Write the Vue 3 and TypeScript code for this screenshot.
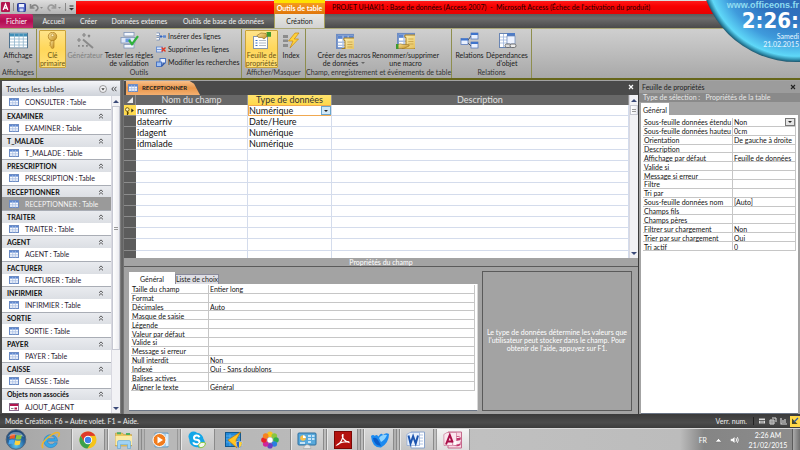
<script setup lang="ts">
import { ref } from 'vue'

interface NavGroup { title: string; item: string; form?: boolean }
interface Prop { label: string; value: string }

const ribbonTabs: { label: string; cls: string }[] = [
  { label: 'Accueil', cls: 't-home' },
  { label: 'Créer', cls: 't-create' },
  { label: 'Données externes', cls: 't-ext' },
  { label: 'Outils de base de données', cls: 't-tools' },
]

const navGroups: NavGroup[] = [
  { title: 'EXAMINER', item: 'EXAMINER : Table' },
  { title: 'T_MALADE', item: 'T_MALADE : Table' },
  { title: 'PRESCRIPTION', item: 'PRESCRIPTION : Table' },
  { title: 'RECEPTIONNER', item: 'RECEPTIONNER : Table' },
  { title: 'TRAITER', item: 'TRAITER : Table' },
  { title: 'AGENT', item: 'AGENT : Table' },
  { title: 'FACTURER', item: 'FACTURER : Table' },
  { title: 'INFIRMIER', item: 'INFIRMIER : Table' },
  { title: 'SORTIE', item: 'SORTIE : Table' },
  { title: 'PAYER', item: 'PAYER : Table' },
  { title: 'CAISSE', item: 'CAISSE : Table' },
  { title: 'Objets non associés', item: 'AJOUT_AGENT', form: true },
]
const selectedItem = ref('RECEPTIONNER : Table')

const fields: { name: string; type: string }[] = [
  { name: 'numrec', type: 'Numérique' },
  { name: 'datearriv', type: 'Date/Heure' },
  { name: 'idagent', type: 'Numérique' },
  { name: 'idmalade', type: 'Numérique' },
]
const emptyRows = 10
const firstType = ref('Numérique')

const fieldProps = ref<Prop[]>([
  { label: 'Taille du champ', value: 'Entier long' },
  { label: 'Format', value: '' },
  { label: 'Décimales', value: 'Auto' },
  { label: 'Masque de saisie', value: '' },
  { label: 'Légende', value: '' },
  { label: 'Valeur par défaut', value: '' },
  { label: 'Valide si', value: '' },
  { label: 'Message si erreur', value: '' },
  { label: 'Null interdit', value: 'Non' },
  { label: 'Indexé', value: 'Oui - Sans doublons' },
  { label: 'Balises actives', value: '' },
  { label: 'Aligner le texte', value: 'Général' },
])

const subsheet = ref('Non')
const tableProps = ref<Prop[]>([
  { label: 'Sous-feuille données hauteu', value: '0cm' },
  { label: 'Orientation', value: 'De gauche à droite' },
  { label: 'Description', value: '' },
  { label: 'Affichage par défaut', value: 'Feuille de données' },
  { label: 'Valide si', value: '' },
  { label: 'Message si erreur', value: '' },
  { label: 'Filtre', value: '' },
  { label: 'Tri par', value: '' },
  { label: 'Sous-feuille données nom', value: '[Auto]' },
  { label: 'Champs fils', value: '' },
  { label: 'Champs pères', value: '' },
  { label: 'Filtrer sur chargement', value: 'Non' },
  { label: 'Trier par sur chargement', value: 'Oui' },
  { label: 'Tri actif', value: '0' },
])
</script>

<template>
  <div class="app">
    <svg class="defs" aria-hidden="true">
      <defs>
        <linearGradient id="paper" x1="0" y1="0" x2="1" y2="1"><stop offset="0" stop-color="#fff3b8" /><stop offset="1" stop-color="#dfb64a" /></linearGradient>
        <linearGradient id="gold" x1="0" y1="0" x2="1" y2="1"><stop offset="0" stop-color="#ffe9a0" /><stop offset="1" stop-color="#c08a1c" /></linearGradient>
        <symbol id="sheet" viewBox="0 0 10 8">
          <rect x=".5" y=".5" width="9" height="7" fill="#fff" stroke="#6d8cc4" />
          <rect x="1" y="1" width="8" height="1.6" fill="#5b86d0" />
          <path d="M1 4.4h8M1 6h8M3.7 1v6.5M6.4 1v6.5" stroke="#a9bfe4" stroke-width=".7" />
        </symbol>
        <symbol id="sheetBig" viewBox="0 0 19 16">
          <rect x=".5" y=".5" width="18" height="15" fill="#fff" stroke="#4f7390" />
          <rect x="1" y="1" width="17" height="3" fill="#3f8fb8" />
          <path d="M1 6.5h17M1 9.5h17M1 12.5h17M5.5 1v14M10 1v14M14.3 1v14" stroke="#8fb4cc" stroke-width=".8" />
        </symbol>
        <symbol id="scroll" viewBox="0 0 13 11">
          <path d="M3 1h8.500q1.500 1 .5 2.500h-2v5q.5 2-1.200 2.200H1.500Q.2 9.500 1.500 8.300H3.400V3Q2 2 3 1z" fill="url(#paper)" stroke="#a87e22" stroke-width=".7" />
          <path d="M5 3.800h3.500M5 5.500h3.500M5 7.200h3.500" stroke="#c39a3c" stroke-width=".5" />
        </symbol>
      </defs>
    </svg>

    <header class="titlebar">
      <div class="quick">
        <svg class="q-logo" viewBox="0 0 9 10"><rect width="9" height="10" rx="1" fill="#b3164f" /><path d="M2.200 8 4.500 2 6.800 8M3 6h3" fill="none" stroke="#fff" stroke-width="1.300" /></svg>
        <i class="q-sep"></i>
        <button class="q-btn" aria-label="Enregistrer"><svg viewBox="0 0 9 9"><rect x=".5" y=".5" width="8" height="8" rx=".8" fill="#4a5fc4" stroke="#2a3a94" /><rect x="2" y="1" width="5" height="3.300" fill="#eef2ff" /><rect x="2.500" y="5.500" width="4" height="3" fill="#c8d2ee" /></svg></button>
        <button class="q-btn wide" aria-label="Annuler"><svg viewBox="0 0 14 9"><path d="M1 1v4h4M1.500 4.500Q5 .5 7.500 3T6 8" fill="none" stroke="#858585" stroke-width="1.600" /><path d="M10.500 4h3l-1.500 1.700z" fill="#888" /></svg></button>
        <button class="q-btn wide" aria-label="Rétablir"><svg viewBox="0 0 14 9"><path d="M8 1v4H4M7.500 4.500Q4 .5 1.500 3T3 8" fill="none" stroke="#9a9a9a" stroke-width="1.600" /><path d="M10.500 4h3l-1.500 1.700z" fill="#888" /></svg></button>
        <i class="q-sep"></i>
        <button class="q-btn tiny" aria-label="Personnaliser"><svg viewBox="0 0 5 9"><path d="M.5 3h4" stroke="#333" /><path d="M0 5h5l-2.500 2.500z" fill="#333" /></svg></button>
      </div>
      <div class="title-red">
        <h1>PROJET UHAKI1 : Base de données (Access 2007) &nbsp;-&nbsp; Microsoft Access (Échec de l'activation du produit)</h1>
      </div>
    </header>

    <nav class="tabs">
      <button class="tab file">Fichier</button>
      <button v-for="t in ribbonTabs" :key="t.label" class="tab" :class="t.cls">{{ t.label }}</button>
      <div class="context">
        <span class="context-title">Outils de table</span>
        <button class="tab active">Création</button>
      </div>
    </nav>

    <section class="ribbon">
      <div class="group g-view">
        <div class="group-body">
          <button class="big">
            <svg viewBox="0 0 19 16"><use href="#sheetBig" /></svg>
            <span>Affichage</span><i class="caret"></i>
          </button>
        </div>
        <span class="group-name">Affichages</span>
      </div>

      <div class="group g-tools">
        <div class="group-body">
          <button class="big on w-key">
            <svg viewBox="0 0 19 17"><circle cx="9.500" cy="4.500" r="4.200" fill="url(#gold)" stroke="#a9771a" stroke-width=".7" /><circle cx="9.500" cy="3.300" r="1.300" fill="#fff3c4" stroke="#a9771a" stroke-width=".5" /><path d="M8 8.500h3v7l-1.500 1.300L8 15.500v-1.300l-1.500-1L8 12l-1.500-1L8 10z" fill="url(#gold)" stroke="#a9771a" stroke-width=".6" /></svg>
            <span>Clé<br />primaire</span>
          </button>
          <button class="big off w-gen" disabled>
            <svg viewBox="0 0 19 17"><path d="M7 7.500 17 16" stroke="#8a8a8a" stroke-width="2" /><path d="M8 1v4M6 3h4M3 6v4M1 8h4M12 3l2 2M14 3l-2 2" stroke="#858585" stroke-width="1.200" /><path d="M2 13h1.800v1.800H2zM6 13h1.800v1.800H6zM10 13h1.800v1.800H10z" fill="#858585" /></svg>
            <span>Générateur</span>
          </button>
          <button class="big w-test">
            <svg viewBox="0 0 19 17"><rect x="4" y=".5" width="10" height="3.500" fill="#f4f8ff" stroke="#7f95b8" stroke-width=".8" /><rect x="1" y="5.500" width="14" height="5.500" fill="#dfe8f8" stroke="#7f95b8" stroke-width=".8" /><rect x="5.500" y="6.500" width="5" height="3.500" fill="#6b9ae0" /><rect x="4" y="12.500" width="10" height="3.500" fill="#f4f8ff" stroke="#7f95b8" stroke-width=".8" /><path d="m9 8 3 4.200 6-8" fill="none" stroke="#2fb23a" stroke-width="2.200" /></svg>
            <span>Tester les règles<br />de validation</span>
          </button>
          <div class="smalls">
            <button class="small"><svg viewBox="0 0 10 9"><path d="M.5 1h3v2.500h-3M.5 8h3V5.500h-3" fill="#fff" stroke="#6b86b4" stroke-width=".8" /><path d="M6.500 4.500H4M5.500 3 4 4.500 5.500 6" fill="none" stroke="#2f62c0" /><path d="M7 3.300h3v2.400H7z" fill="#5b86d0" /></svg>Insérer des lignes</button>
            <button class="small"><svg viewBox="0 0 10 9"><rect x=".5" y="2" width="6" height="5" fill="#dbe6fa" stroke="#5b86d0" stroke-width=".8" /><path d="M.5 4.500h6" stroke="#5b86d0" stroke-width=".8" /><path d="m5.500 2.500 4 4M9.500 2.500l-4 4" stroke="#e2361e" stroke-width="1.400" /></svg>Supprimer les lignes</button>
            <button class="small"><svg viewBox="0 0 10 9"><rect x="4" y=".5" width="5.500" height="4.500" fill="#e8f0ff" stroke="#3f6cc0" stroke-width=".9" /><rect x=".5" y="4" width="5" height="4.500" fill="#9fc0f2" stroke="#3f6cc0" stroke-width=".9" /><path d="m5 8 3-3.500 1 1L6 8.700z" fill="#2c57ac" /></svg>Modifier les recherches</button>
          </div>
        </div>
        <span class="group-name">Outils</span>
      </div>

      <div class="group g-show">
        <div class="group-body">
          <button class="big on w-sheet">
            <svg viewBox="0 0 19 17"><rect x="1.500" y="4.500" width="14" height="12" fill="#fff" stroke="#8696ac" /><path d="M3.500 8.500h2M3.500 11h2M3.500 13.500h2" stroke="#3a72c8" /><path d="M7 8.500h7M7 11h7M7 13.500h7" stroke="#9aa7ba" stroke-width=".8" /><path d="M5 3.500 9 1l5 .5 1 3-3 2.500-2-1.500H6.500z" fill="url(#gold)" stroke="#8b661a" stroke-width=".6" /><path d="M14.500 0H19v4.800h-4z" fill="#3f9a2e" /></svg>
            <span>Feuille de<br />propriétés</span>
          </button>
          <button class="big w-index">
            <svg viewBox="0 0 19 17"><path d="M1 3h5v3H1zM1 7.500h5v2.500H1zM1 12h5v3H1z" fill="#8c8c8c" /><path d="M13 1 6.500 9H11l-3 7 8.500-9h-4.300L17 1z" fill="#ffd23c" stroke="#c88a10" stroke-width=".7" /></svg>
            <span>Index</span>
          </button>
        </div>
        <span class="group-name">Afficher/Masquer</span>
      </div>

      <div class="group g-events">
        <div class="group-body">
          <button class="big w-macro">
            <svg viewBox="0 0 19 17"><svg x="1" y="1" width="11" height="10"><use href="#sheet" /></svg><svg x="5" y="4" width="14" height="12"><use href="#scroll" /></svg></svg>
            <span>Créer des macros<br />de données <i class="caret inline"></i></span>
          </button>
          <button class="big w-rename">
            <svg viewBox="0 0 19 17"><svg x="1" y="0" width="9" height="8"><use href="#sheet" /></svg><svg x="5" y="1" width="14" height="12"><use href="#scroll" /></svg><path d="M1 13q3-2 6-.5h5q2 0 1 1.500l-5 2.500H1z" fill="url(#gold)" stroke="#8b661a" stroke-width=".5" /><path d="M0 12h2.500v5H0z" fill="#3f9a2e" /></svg>
            <span>Renommer/supprimer<br />une macro</span>
          </button>
        </div>
        <span class="group-name">Champ, enregistrement et événements de table</span>
      </div>

      <div class="group g-rel">
        <div class="group-body">
          <button class="big w-rel">
            <svg viewBox="0 0 19 17"><path d="M7 9.500 11 4M7 10l4 4" stroke="#555" /><g fill="#eaf1ff" stroke="#4a6fb8" stroke-width=".7"><rect x="1" y="6.500" width="7" height="6" /><rect x="11" y="1" width="7" height="6" /><rect x="11" y="10" width="7" height="6" /></g><path d="M1 6.500h7v2H1zM11 1h7v2h-7zM11 10h7v2h-7z" fill="#3f74cc" /></svg>
            <span>Relations</span>
          </button>
          <button class="big w-dep">
            <svg viewBox="0 0 19 17"><rect x="1.500" y="1.500" width="12" height="14" fill="#fff" stroke="#6a86b4" /><path d="M2 5h11M2 8h11M2 11h11M5.500 2v13M9.500 2v13" stroke="#9db4dc" stroke-width=".8" /><path d="M9 1h8v3H9z" fill="#4f7cc6" /><rect x="9" y="4" width="8" height="8" fill="#eef3ff" stroke="#6a86b4" stroke-width=".7" /><rect x="7" y="12" width="6" height="3.500" rx="1.700" fill="#ddd" stroke="#666" stroke-width=".9" /><rect x="12" y="12" width="6" height="3.500" rx="1.700" fill="#eee" stroke="#666" stroke-width=".9" /></svg>
            <span>Dépendances<br />d'objet</span>
          </button>
        </div>
        <span class="group-name">Relations</span>
      </div>
    </section>

    <main class="work">
      <aside class="nav">
        <header class="nav-head">
          <h2>Toutes les tables</h2>
          <button class="round" aria-label="Filtrer"><svg viewBox="0 0 8 8"><circle cx="4" cy="4" r="3.500" fill="#f2f2f4" stroke="#777" stroke-width=".7" /><path d="M2.300 3.200h3.400L4 5.400z" fill="#444" /></svg></button>
          <button class="shut" aria-label="Réduire le volet"><svg viewBox="0 0 6 6"><path d="M2.700.8.8 3l1.900 2.200M5.400.8 3.500 3l1.900 2.200" fill="none" stroke="#333" stroke-width=".9" /></svg></button>
        </header>
        <div class="nav-body">
          <div class="nav-list">
            <a class="nav-item" href="#consulter"><svg viewBox="0 0 10 8"><use href="#sheet" /></svg>CONSULTER : Table</a>
            <template v-for="g in navGroups" :key="g.title">
              <button class="nav-group">{{ g.title }}<svg viewBox="0 0 6 6"><path d="M1 2.800 3 .9l2 1.900M1 5.400l2-1.900 2 1.900" fill="none" stroke="#333" stroke-width=".8" /></svg></button>
              <a class="nav-item" :class="{ current: g.item === selectedItem }" :href="'#' + g.title.toLowerCase()" @click="selectedItem = g.item">
                <svg v-if="g.form" viewBox="0 0 10 8"><rect x=".5" y=".5" width="9" height="7" fill="#fff" stroke="#8a6a8a" /><rect x="1" y="1" width="8" height="2" fill="#b3164f" /><path d="M2 5.500h2.500" stroke="#888" /><rect x="5.500" y="4.500" width="2.500" height="2" fill="#b3164f" /></svg>
                <svg v-else viewBox="0 0 10 8"><use href="#sheet" /></svg>{{ g.item }}
              </a>
            </template>
          </div>
          <div class="scroll nav-scroll"><i class="up"></i><div class="thumb"><b></b></div><i class="down"></i></div>
        </div>
      </aside>

      <section class="doc">
        <div class="doc-tabs">
          <button class="doc-tab"><svg viewBox="0 0 10 8"><use href="#sheet" /></svg>RECEPTIONNER</button>
          <button class="close" aria-label="Fermer"><svg viewBox="0 0 6 6"><path d="m1 1 4 4M5 1 1 5" stroke="#fff" stroke-width="1.200" /></svg></button>
        </div>
        <div class="grid-wrap">
          <div class="grid-clip">
            <table class="design">
              <colgroup><col class="c-sel" /><col class="c-name" /><col class="c-type" /><col /></colgroup>
              <thead>
                <tr><th><i class="corner"></i></th><th>Nom du champ</th><th class="hot">Type de données</th><th>Description</th></tr>
              </thead>
              <tbody>
                <tr v-for="(f, i) in fields" :key="f.name">
                  <td class="sel" :class="{ hot: i === 0 }"><svg v-if="i === 0" viewBox="0 0 10 8"><circle cx="2.800" cy="2.500" r="1.800" fill="#fff3b0" stroke="#5a4200" stroke-width=".8" /><path d="M3 4.200V8M3 6h1.500" stroke="#5a4200" stroke-width="1.200" /><path d="M6.800 1.500v4l2.500-2z" fill="#222" /></svg></td>
                  <td>{{ f.name }}</td>
                  <td v-if="i === 0" class="edit">
                    <div class="combo"><select v-model="firstType" aria-label="Type de données"><option>Numérique</option><option>Texte</option><option>Date/Heure</option></select><i></i></div>
                  </td>
                  <td v-else>{{ f.type }}</td>
                  <td></td>
                </tr>
                <tr v-for="n in emptyRows" :key="n"><td class="sel"></td><td></td><td></td><td></td></tr>
              </tbody>
            </table>
          </div>
          <div class="scroll grid-scroll"><i class="up"></i><div class="thumb"><b></b></div><i class="down"></i></div>
        </div>
        <h3 class="pane-title">Propriétés du champ</h3>
        <div class="pane">
          <div class="pane-left">
            <div class="pane-tabs"><button class="pt on">Général</button><button class="pt">Liste de choix</button></div>
            <div class="pane-sheet">
              <table class="props field-props">
                <colgroup><col class="c-label" /><col /></colgroup>
                <tbody>
                  <tr v-for="(p, i) in fieldProps" :key="p.label">
                    <th><label :for="'fp' + i">{{ p.label }}</label></th>
                    <td><input :id="'fp' + i" v-model="p.value" type="text" /></td>
                  </tr>
                </tbody>
              </table>
            </div>
          </div>
          <p class="help">Le type de données détermine les valeurs que l'utilisateur peut stocker dans le champ. Pour obtenir de l'aide, appuyez sur F1.</p>
        </div>
      </section>

      <aside class="sheet">
        <header class="sheet-head"><h2>Feuille de propriétés</h2><button class="close" aria-label="Fermer la feuille"><svg viewBox="0 0 6 6"><path d="m1 1 4 4M5 1 1 5" stroke="#222" stroke-width="1.100" /></svg></button></header>
        <p class="sheet-sub">Type de sélection : &nbsp; Propriétés de la table</p>
        <div class="sheet-tabs"><button class="pt on">Général</button></div>
        <div class="sheet-body">
          <table class="props table-props">
            <colgroup><col class="c-plabel" /><col /></colgroup>
            <tbody>
              <tr>
                <th><label for="sub">Sous-feuille données étendu</label></th>
                <td><div class="combo grey"><select id="sub" v-model="subsheet"><option>Non</option><option>Oui</option></select><i></i></div></td>
              </tr>
              <tr v-for="(p, i) in tableProps" :key="p.label">
                <th><label :for="'tp' + i">{{ p.label }}</label></th>
                <td><input :id="'tp' + i" v-model="p.value" type="text" /></td>
              </tr>
            </tbody>
          </table>
        </div>
      </aside>
    </main>

    <footer class="status">
      <span>Mode Création. F6 = Autre volet. F1 = Aide.</span>
      <span class="num">Verr. num.</span>
      <div class="views">
        <button aria-label="Feuille de données"><svg viewBox="0 0 8 8"><path d="M1 1.500h6v5H1z" fill="#ddd" /><path d="M1 3.500h6M3 3v3.500M5 3v3.500" stroke="#444" stroke-width=".7" /></svg></button>
        <button aria-label="Tableau croisé"><svg viewBox="0 0 8 8"><path d="M1 3h4v4H1zM3 1h4v4" fill="none" stroke="#ddd" /><path d="M3 3v4M1 5h4" stroke="#ddd" stroke-width=".7" /></svg></button>
        <button aria-label="Graphique croisé"><svg viewBox="0 0 8 8"><path d="M1 1v6h6M3 3v3M5 2v4" fill="none" stroke="#ddd" stroke-width="1.100" /></svg></button>
        <button class="on" aria-label="Création"><svg viewBox="0 0 8 8"><path d="M1 1.500v5.500h5.500z" fill="#4a4a2a" /><path d="m3 5 4-4" stroke="#2a5ca8" stroke-width="1.300" /></svg></button>
      </div>
    </footer>

    <footer class="taskbar">
      <button class="start" aria-label="Démarrer"><svg viewBox="0 0 24 22"><defs><radialGradient id="orb" cx=".5" cy=".8" r=".8"><stop offset="0" stop-color="#5fc8f0" /><stop offset=".5" stop-color="#2a6ea8" /><stop offset="1" stop-color="#173a66" /></radialGradient></defs><circle cx="12" cy="11" r="10.300" fill="url(#orb)" stroke="#51657c" /><path d="M6 6q3-1.500 5.500-.3l-1 4.600q-2.500-1-5.300.2z" fill="#ee5a24" /><path d="M12.500 6q3 1.300 5.800 0l-1 4.500q-3 1.200-5.700 0z" fill="#8cc63f" /><path d="M5 11.500q2.700-1.200 5.300-.1l-1 4.600q-2.500-1-5.300.2z" fill="#4aa8f0" /><path d="M11.300 11.800q3 1.200 5.700 0l-1 4.500q-3 1.200-5.700 0z" fill="#ffd23c" /><path d="M3.500 8.500a9 8 0 0 1 17 0Q12 4 3.500 8.500z" fill="#fff" opacity=".35" /></svg></button>
      <div class="apps">
        <button class="app-btn" aria-label="Internet Explorer"><svg viewBox="0 0 20 18"><path d="M16.500 10.200H6.300a4 3.800 0 0 0 7.200 1.500h2.800a6.800 6.500 0 1 1 .2-1.500zM6.400 7.700h7.300a3.700 3.400 0 0 0-7.300 0z" fill="#38a8e8" stroke="#1b78c0" stroke-width=".5" /><path d="M2 17Q-1 13 7 6.500T18 2q1 1-.8 3.800" fill="none" stroke="#f0b429" stroke-width="1.500" /></svg></button>
        <button class="app-btn lit" aria-label="Chrome"><svg viewBox="0 0 20 18"><circle cx="10" cy="9" r="8.500" fill="#f6c419" /><path d="M2.700 4.600A8.500 8.500 0 0 1 17.400 4.800L10 5 6 11z" fill="#df3a2b" /><path d="M2.600 4.700A8.500 8.500 0 0 0 9.400 17.500L13.500 11 6.300 11z" fill="#3ba14c" /><circle cx="10" cy="9" r="4.200" fill="#fff" /><circle cx="10" cy="9" r="3.200" fill="#3f80ea" /></svg></button>
        <button class="app-btn lit stack" aria-label="Explorateur"><svg viewBox="0 0 20 18"><path d="M1.500 2h7l1 1.500h8V15h-16z" fill="#e9c65c" stroke="#b8912f" stroke-width=".5" /><path d="M3 1.200h4v2H3zM12 2h4v2h-4z" fill="#4fae62" /><path d="M1.500 5h16.500v9H1.500z" fill="#fbeaa6" /><path d="M3.500 17.500V11q0-1.500 1.500-1.500h10q1.500 0 1.500 1.500v6.500h-3v-4h-7v4z" fill="#9fd2f4" stroke="#5fa2d4" stroke-width=".6" /></svg></button>
        <button class="app-btn media" aria-label="Lecteur"><svg viewBox="0 0 20 18"><path d="M4 2h13v14H4z" fill="#a9cde8" stroke="#6d9cc0" /><path d="M15 3h2.500v12H15z" fill="#d8ecfa" /><circle cx="8.500" cy="9" r="6.500" fill="#f27c1d" stroke="#fff" /><path d="M6.500 5.500v7l5.500-3.500z" fill="#fff" /></svg></button>
        <button class="app-btn lit" aria-label="Skype"><svg viewBox="0 0 20 18"><circle cx="6.500" cy="5.500" r="5" fill="#14a7e8" /><circle cx="13" cy="12" r="5" fill="#14a7e8" /><circle cx="9.500" cy="9" r="7.200" fill="#14a7e8" /><path d="M12.500 6.200Q11.500 4.300 9.300 4.500T7 6.700t2.600 2.100 2.900 2.300-2.900 2.200-3.200-2" fill="none" stroke="#fff" stroke-width="2" /><path d="M11.500 14q2-4 7-2-.5 5-6 4.700z" fill="#f4f8ee" stroke="#8cc63f" /></svg></button>
        <button class="app-btn" aria-label="Mise à jour"><svg viewBox="0 0 20 18"><rect x="1.500" y="1.500" width="15" height="14" fill="#2389d8" stroke="#12588e" /><path d="M2 5h14M2 8h14M2 11h14M6 3v12" stroke="#6cbcf2" stroke-width=".7" /><path d="M16.500 1 4 9l9 8-1-8z" fill="#ffc524" stroke="#c4790a" stroke-width=".7" /><path d="m12 11 3-1 3.500 1q0 5-3.500 6.500Q12 16 12 11z" fill="#2a62c0" stroke="#e8e8e8" stroke-width=".6" /><path d="M15 10.500v6.500q3-2 3.200-5.500z" fill="#ffd23c" /></svg></button>
        <button class="app-btn" aria-label="Photos"><svg viewBox="0 0 20 18"><g><circle cx="10" cy="3.300" r="2.800" fill="#f7c51e" /><circle cx="14.300" cy="5" r="2.800" fill="#8cc63f" /><circle cx="16" cy="9" r="2.800" fill="#2fae4a" /><circle cx="14.300" cy="13" r="2.800" fill="#2b7fe0" /><circle cx="10" cy="14.800" r="2.800" fill="#6b3fc4" /><circle cx="5.700" cy="13" r="2.800" fill="#d0269a" /><circle cx="4" cy="9" r="2.800" fill="#e8232a" /><circle cx="5.700" cy="5" r="2.800" fill="#f58220" /></g><circle cx="10" cy="9" r="2.500" fill="#fff" /></svg></button>
        <button class="app-btn lit" aria-label="Panneau"><svg viewBox="0 0 20 18"><rect x="1" y="2" width="18" height="12" rx="1" fill="#58a9dc" stroke="#2d6f9e" /><circle cx="6" cy="7" r="2.800" fill="#f7c04a" /><path d="M6 4.200V7h2.800a2.800 2.800 0 0 0-2.800-2.800z" fill="#fff" /><path d="M11 5h3M15 5h2.500M11 8h3M15 8h2.500M11 11h3M3 12h5" stroke="#e8f6ff" stroke-width="1.400" /><path d="M6.500 17.500q0-3 3.500-4 4 .5 4 4z" fill="#e6e6e6" stroke="#999" stroke-width=".5" /></svg></button>
        <button class="app-btn lit stack" aria-label="Adobe Reader"><svg viewBox="0 0 20 18"><rect x="1.500" y=".5" width="17" height="17" fill="#b3120e" stroke="#7a0806" /><path d="M4 14q2.500-.5 4.500-4.500T10 3.500q-1.300 0-.3 3T16 11.500q.5-1.500-5-.5T4 14z" fill="none" stroke="#fff" stroke-width="1.200" /></svg></button>
        <button class="app-btn lit stack" aria-label="Messagerie"><svg viewBox="0 0 20 18"><path d="M1 5q2-2 4 0 1-2 3.500.5Q11 1 13 4q3-3 6-1 0 9-8 13.500Q2 17 1 5z" fill="#1b8af0" /><path d="M3 7q3-1 5 2t3 6Q4 14 3 7z" fill="#0a5cc8" /><path d="M9 7q3-4 8-3-2 5-6 7z" fill="#8ed4ff" /></svg></button>
        <button class="app-btn lit" aria-label="Word"><svg viewBox="0 0 20 18"><path d="M5 1h13.500v16H5z" fill="#fff" stroke="#8aa4cc" /><path d="M12 4h5M12 7h5M12 10h5M12 13h5" stroke="#9ab4dc" stroke-width=".8" /><path d="M.8 3.500 4 1.500h9.500v13H1z" fill="#e8f0fc" stroke="#7d9cd0" stroke-width=".6" /><path d="m2.500 4.500 2 8 2.600-7.300 2.600 7.300 2.300-8" fill="none" stroke="#1d56b0" stroke-width="2" /></svg></button>
        <button class="app-btn bright" aria-label="Access"><svg viewBox="0 0 20 18"><path d="M5 1h13.500v16H5z" fill="#f9d5e2" stroke="#c46a8c" /><ellipse cx="14" cy="7" rx="3.500" ry="1.500" fill="#fff" stroke="#b3164f" stroke-width=".7" /><path d="M10.500 7v7q3.500 2.500 7 0V7" fill="#c0356c" /><path d="M.8 3.500 4 1.500h9.500v13H1z" fill="#fbe6ee" stroke="#c46a8c" stroke-width=".6" /><path d="M3 13.500 6.800 4l3.700 9.500M4.500 10.500h5" fill="none" stroke="#a80f48" stroke-width="2" /><path d="m9 12 4-2 5-1-1.500 4-6 1z" fill="#fff" opacity=".9" /></svg></button>
      </div>
      <div class="tray">
        <span class="lang">FR</span>
        <button aria-label="Icônes masquées"><svg viewBox="0 0 6 6"><path d="M.5 4.500h5L3 1.800z" fill="#fff" stroke="#777" stroke-width=".5" /></svg></button>
        <button aria-label="Volume"><svg viewBox="0 0 9 8"><path d="M.5 2.700h1.800L4.800.7v6.600L2.300 5.300H.5z" fill="#fff" stroke="#777" stroke-width=".4" /><path d="M6 2.200q1.200 1.800 0 3.600M7.400 1.200q1.800 2.800 0 5.600" fill="none" stroke="#fff" stroke-width=".9" /></svg></button>
        <time>2:26 AM<br />21/02/2015</time>
        <i class="peek"></i>
      </div>
    </footer>

    <div class="clock">
      <svg viewBox="0 0 96 64" aria-hidden="true">
        <defs><radialGradient id="sky" gradientUnits="userSpaceOnUse" cx="92" cy="-34" r="97"><stop offset="0" stop-color="#2a5fae" /><stop offset=".55" stop-color="#2f72bf" /><stop offset=".78" stop-color="#3f9bdc" /><stop offset=".93" stop-color="#5fd8f8" /><stop offset=".97" stop-color="#2b86a4" /><stop offset="1" stop-color="#173c50" /></radialGradient></defs>
        <circle cx="92" cy="-34" r="96" fill="url(#sky)" />
      </svg>
      <div class="clock-text"><span class="site">www.officeons.fr</span><strong>2:26:</strong><span>Samedi</span><span>21.02.2015</span></div>
    </div>
  </div>
</template>

<style>
body { margin: 0; overflow: hidden; }
</style>

<style scoped>
.app { position: relative; display: flex; flex-direction: column; min-height: 100vh; overflow: hidden; font: 7px/8px Lato, "Open Sans", sans-serif; color: #111; background: #6a6a6a; }
.app * { box-sizing: border-box; }
.defs { position: absolute; width: 0; height: 0; }
h1, h2, h3, p { margin: 0; font-size: inherit; font-weight: 400; }
button, input, select { font: inherit; color: inherit; margin: 0; padding: 0; border: 0; background: none; border-radius: 0; outline: 0; }
svg { display: block; flex: none; }
a { color: inherit; text-decoration: none; }

.titlebar { display: flex; height: 14px; background: linear-gradient(#dedede, #b4b4b4); }
.quick { display: flex; align-items: center; gap: 3px; width: 76px; padding-left: 1px; }
.q-logo { width: 9px; height: 10px; }
.q-sep { width: 1px; height: 8px; background: #888; }
.q-btn { width: 9px; height: 9px; }
.q-btn.wide { width: 15px; }
.q-btn.tiny { width: 5px; }
.q-btn svg { width: 100%; height: 9px; }
.title-red { flex: 1; margin-top: 1px; padding-left: 256px; background: linear-gradient(#ff1a1a, #f80000 40%, #e60000); }
.title-red h1 { line-height: 12px; color: #200; white-space: nowrap; }

.tabs { display: flex; height: 14px; background: linear-gradient(#5a5a5a, #6c6c6c 30%, #4a4a4a); color: #f0f0f0; }
.tab { height: 14px; line-height: 14px; text-align: center; white-space: nowrap; }
.file { width: 33px; background: linear-gradient(#d2256c, #b10c50 50%, #c72c70); color: #fff; border-radius: 2px 2px 0 0; }
.t-home { width: 41px; }
.t-create { width: 29px; }
.t-ext { width: 73px; }
.t-tools { width: 95px; }
.context { position: relative; width: 51px; margin-left: 3px; }
.context-title { position: absolute; left: 0; right: 0; bottom: 14px; height: 14px; border-top: 3px solid #ffe000; background: linear-gradient(#f59a1c, #e0760a); color: #fff; line-height: 11px; text-align: center; font-weight: 700; white-space: nowrap; }
.active { display: block; width: 100%; background: linear-gradient(#e8e8e2, #d2d2d2); color: #222; border: solid #a6a05c; border-width: 0 1px; }

.ribbon { display: flex; height: 52px; background: linear-gradient(#cfcfcf, #bcbcbc 50%, #a8a8a8); border-top: 1px solid #aaa878; border-bottom: 2px solid #66661a; color: #1a1a1a; }
.group { display: flex; flex-direction: column; border-right: 1px solid #8e8e4e; }
.group-body { display: flex; flex: 1; padding-top: 1px; }
.group-name { height: 10px; line-height: 9px; text-align: center; white-space: nowrap; color: #333; }
.g-view { width: 37px; }
.g-tools { width: 205px; }
.g-tools .group-body { padding-left: 2px; }
.g-show { width: 64px; }
.g-show .group-body { padding-left: 3px; gap: 1px; }
.g-events { width: 146px; }
.g-events .group-body { padding-left: 11px; }
.g-rel { width: 80px; }
.g-rel .group-body { padding-left: 3px; }
.big { display: flex; flex-direction: column; align-items: center; justify-content: flex-start; height: 38px; width: 36px; padding-top: 2px; line-height: 8px; white-space: nowrap; }
.big svg { width: 19px; height: 17px; margin-bottom: 2px; }
.big.on { background: linear-gradient(#ffe48c, #ffd75a 50%, #ffe07a); outline: 1px solid #c8a23c; outline-offset: -1px; border-radius: 1px; color: #6a5312; }
.big.off { color: #808080; }
.w-key { width: 27px; }
.w-gen { width: 38px; }
.w-test { width: 50px; }
.w-sheet { width: 33px; }
.w-index { width: 24px; }
.w-macro { width: 54px; }
.w-rename { width: 69px; }
.w-rel { width: 29px; }
.w-dep { width: 46px; }
.caret { width: 0; height: 0; border: 2px solid transparent; border-top-color: #666; border-bottom: 0; margin-top: 2px; }
.caret.inline { display: inline-block; margin: 0 0 2px 1px; }
.smalls { display: flex; flex-direction: column; gap: 5px; padding: 2px 0 0 2px; }
.small { display: flex; align-items: center; gap: 2px; height: 8px; text-align: left; white-space: nowrap; }
.small svg { width: 10px; height: 9px; }

.work { display: flex; flex: 1; min-height: 334px; }
.nav { display: flex; flex-direction: column; width: 124px; padding: 1px 4px 1px 2px; background: linear-gradient(90deg, #4a4a4a, #4a4a4a 2px, #8a8a8a 120px, #5c5c5c 122px, #7c7c7c); }
.nav-head { display: flex; align-items: center; height: 15px; padding-left: 4px; background: linear-gradient(#f4f5f8, #cfd3da); font-size: 8px; color: #333; }
.nav-head h2 { flex: 1; }
.round svg { width: 8px; height: 8px; }
.shut { width: 13px; padding-left: 4px; }
.shut svg { width: 6px; height: 6px; }
.nav-body { display: flex; flex: 1; background: #fff; }
.nav-list { display: grid; grid-auto-rows: 1fr; flex: 1; }
.nav-item { display: flex; align-items: center; gap: 6px; padding-left: 7px; color: #2a1a30; white-space: nowrap; }
.nav-item svg { width: 10px; height: 8px; }
.nav-item.current { background: #9a9a9a; color: #f4f4f4; }
.nav-group { display: flex; align-items: center; justify-content: space-between; padding: 0 7px 0 5px; border-top: 1px solid #a9adb5; background: linear-gradient(#e9ebef, #dcdfe4); font-weight: 700; color: #111; }
.nav-group svg { width: 6px; height: 6px; }

.scroll { display: flex; flex-direction: column; align-items: center; width: 9px; background: #f2f2f5; border-left: 1px solid #d8d8e0; }
.scroll .up, .scroll .down { width: 0; height: 0; border: 3px solid transparent; margin: 4px 0 3px; }
.scroll .up { border-bottom-color: #3b4a78; border-top: 0; }
.scroll .down { margin-top: auto; border-top-color: #3b4a78; border-bottom: 0; }
.thumb { display: flex; align-items: center; justify-content: center; width: 8px; background: linear-gradient(90deg, #fff, #ececf0); border: 1px solid #c6c8d2; }
.thumb b { width: 4px; height: 3px; border: solid #999; border-width: 1px 0; }
.nav-scroll .thumb { flex: 1; margin-bottom: 57px; }

.doc { display: flex; flex-direction: column; flex: 1; min-width: 0; padding-top: 1px; border-right: 1px solid #3c3c3c; background: #a3a3a3; }
.doc-tabs { display: flex; justify-content: space-between; height: 14px; background: #4a4a4a; }
.doc-tab { display: flex; align-items: center; gap: 4px; width: 74px; margin-left: 2px; padding-left: 2px; background: linear-gradient(#f9c08a, #e8954a 50%, #f4b070); clip-path: polygon(0 0, 86% 0, 92% 20%, 100% 100%, 0 100%); font-weight: 700; font-size: 6px; color: #222; }
.doc-tab svg { width: 10px; height: 8px; }
.close { display: flex; align-items: center; justify-content: center; width: 14px; height: 12px; }
.close svg { width: 6px; height: 6px; }
.grid-wrap { display: flex; flex: 1; min-height: 0; background: #fff; }
.grid-clip { flex: 1; height: 163px; overflow: hidden; }
.design { width: 100%; height: 167px; table-layout: fixed; border-collapse: separate; border-spacing: 0; font-size: 9px; line-height: 10px; }
.c-sel { width: 12px; }
.c-name { width: 112px; }
.c-type { width: 84px; }
.design th { height: 10px; padding: 0; overflow: hidden; background: #686868; color: #e0e0e0; font-weight: 400; text-align: center; border-right: 1px solid #909090; }
.design th.hot { background: linear-gradient(#ffe36e, #ffd84a); color: #333; }
.corner { display: block; width: 0; height: 0; margin-left: 3px; border: solid transparent; border-width: 0 0 6px 6px; border-bottom-color: #eee; }
.design td { height: 11px; padding: 0 1px; box-shadow: inset 0 -1px #d4dcec; border-right: 1px solid #d4dcec; white-space: nowrap; }
.design td.sel { padding: 0; background: #5c5c5c; box-shadow: inset 0 -1px #8c8c8c; border-right: 0; }
.design td.sel.hot { background: #ffdc50; }
.sel svg { width: 11px; height: 8px; }
.design td.edit { padding: 0; box-shadow: inset 0 0 0 1px #f0a850; }
.combo { display: flex; align-items: center; }
.combo select { flex: 1; min-width: 0; height: 10px; line-height: 10px; padding-left: 1px; appearance: none; }
.combo i { display: flex; align-items: center; justify-content: center; width: 10px; height: 9px; background: #cfe8f8; border: 1px solid #6aa6cc; }
.combo i::after { content: ""; border: 2px solid transparent; border-top-color: #222; border-bottom: 0; }
.grid-scroll .thumb { height: 10px; }
.pane-title { height: 9px; line-height: 8px; text-align: center; color: #fff; border-bottom: 1px solid #5a5a5a; }
.pane { display: flex; gap: 4px; height: 147px; padding: 4px 6px 3px 5px; }
.pane-left { display: flex; flex-direction: column; flex: 1; padding-top: 1px; }
.pane-tabs, .sheet-tabs { display: flex; align-items: flex-end; height: 12px; }
.pt { height: 10px; width: 44px; line-height: 9px; background: #dedee4; border: 1px solid #8a8a9a; border-bottom: 0; color: #222; text-align: center; white-space: nowrap; }
.pt.on { width: 46px; height: 12px; background: #fff; border-color: #fff; line-height: 10px; }
.pane-sheet { flex: 1; padding: 1px 2px; background: #fff; border-right: 1px solid #d8d8d8; border-bottom: 1px solid #6a7484; }
.props { width: 100%; table-layout: fixed; border-collapse: separate; border-spacing: 0; }
.props th, .props td { padding: 0 0 0 1px; text-align: left; font-weight: 400; overflow: hidden; white-space: nowrap; border-right: 1px solid #c6c6c6; box-shadow: inset 0 -1px #c6c6c6; }
.props label { display: block; line-height: 8px; }
.props input, .props select { display: block; width: 100%; height: 8px; line-height: 8px; }
.field-props { height: 106px; }
.c-label { width: 78px; }
.help { display: flex; align-items: center; width: 150px; padding: 0 4px 2px; border: 1px solid #5a5a5a; color: #fff; text-align: center; }

.sheet { display: flex; flex-direction: column; width: 161px; padding: 1px 2px 0; background: #a3a3a3; }
.sheet-head { display: flex; justify-content: space-between; height: 12px; line-height: 12px; margin: 0 -2px; padding-left: 3px; background: #9c9c9c; color: #222; }
.sheet-sub { height: 9px; line-height: 9px; margin: 0 -2px; padding-left: 4px; background: #8a8a8a; color: #e8e8e8; white-space: nowrap; }
.sheet-tabs { height: 13px; }
.sheet-tabs .pt.on { width: 28px; }
.sheet-body { flex: 1; padding: 3px 2px 0; background: #fff; border-bottom: 1px solid #6a7484; }
.table-props { height: 133px; }
.c-plabel { width: 90px; }
.combo.grey select { height: 8px; padding-left: 0; }
.combo.grey i { height: 8px; background: #e4e4e4; border-color: #777; }

.status { display: flex; align-items: center; height: 14px; padding-left: 5px; background: linear-gradient(#3a3a3a, #4c4c4c 60%, #3c3c3c); color: #ececec; }
.status .num { margin-left: auto; padding-right: 6px; border-right: 1px solid #222; }
.views { display: flex; align-items: center; gap: 1px; padding-left: 3px; }
.views button { width: 10px; height: 11px; padding: 1px; }
.views svg { width: 8px; height: 8px; }
.views .on { background: #ffd84a; }

.taskbar { display: flex; height: 22px; background: linear-gradient(90deg, #a4a4a4, #b2b2b2 10%, #c0c0c0 60%, #bcbcbc 85%, #858585 88%, #8c8c8c); border-top: 1px solid #dadada; }
.start { width: 34px; padding-left: 4px; }
.start svg { width: 24px; height: 21px; }
.apps { display: grid; grid-template-columns: repeat(12, 1fr); gap: 2px; width: 436px; }
.app-btn { display: flex; align-items: center; justify-content: center; }
.app-btn svg { width: 20px; height: 18px; }
.app-btn.lit { background: linear-gradient(#d6d6d6, #c4c4c4); border: solid #8a8a8a; border-width: 0 1px; box-shadow: inset 1px 0 #e8e8e8; }
.app-btn.stack { box-shadow: inset 1px 0 #e8e8e8, inset -2px 0 #b0b0b0, inset -3px 0 #8a8a8a; }
.app-btn.media { background: #b8b8b8; border: solid #989898; border-width: 0 1px; }
.app-btn.bright { background: linear-gradient(#f4f4f4, #dedede); border: 1px solid #999; border-width: 0 1px; }
.tray { display: flex; align-items: center; gap: 7px; margin-left: auto; color: #fff; height: 100%; }
.tray svg { width: 9px; height: 8px; }
.tray time { width: 44px; line-height: 10px; text-align: center; }
.peek { width: 8px; height: 100%; margin-left: -5px; background: linear-gradient(90deg, #aaa, #707070); border-left: 1px solid #5c5c5c; }

.clock { position: absolute; top: 0; right: 0; width: 96px; height: 64px; }
.clock svg { position: absolute; inset: 0; width: 96px; height: 64px; }
.clock-text { position: relative; display: flex; flex-direction: column; align-items: flex-end; padding-right: 1px; color: #e6f6ff; }
.site { height: 10px; line-height: 10px; font-weight: 700; font-size: 9px; font-family: "Liberation Sans", sans-serif; color: #8fdcf0; }
.clock strong { height: 22px; font: 700 22px/22px "DejaVu Sans Condensed", "Open Sans", sans-serif; color: #fff; }
.clock-text span:nth-child(4) { line-height: 9px; }
</style>
